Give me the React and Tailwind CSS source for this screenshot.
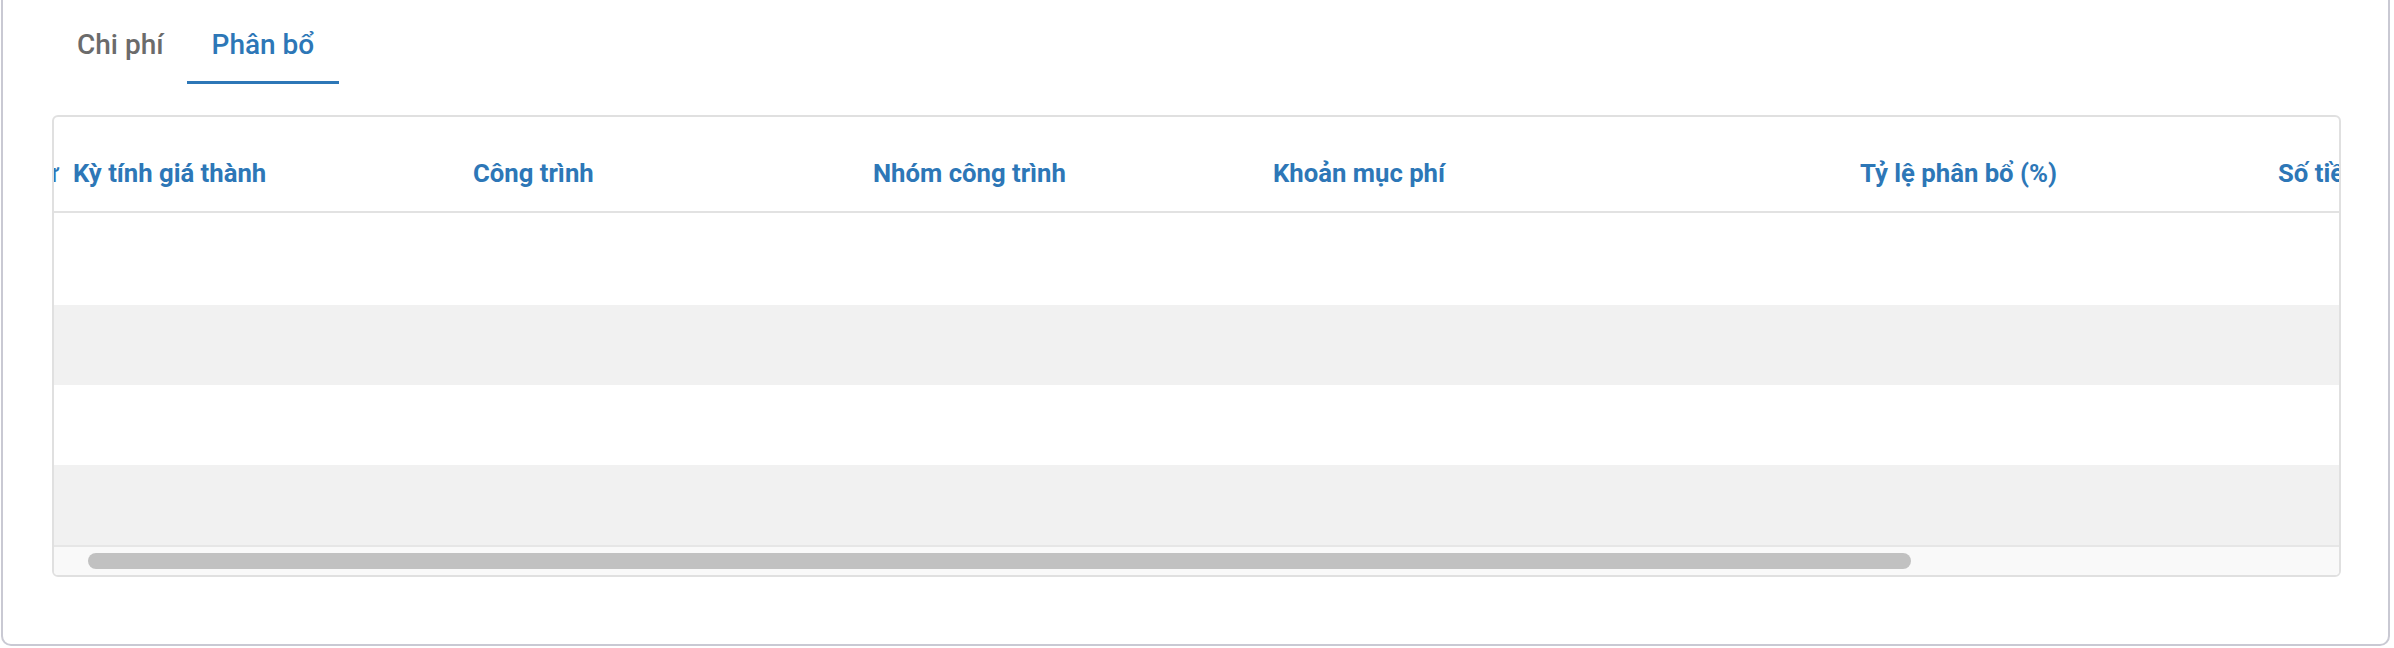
import React from "react";

const FONT = { fontFamily: "Roboto, 'Noto Sans', Arial, sans-serif" };

export default function App() {
  return (
    <div className="w-[2394px] h-[648px] bg-white" style={FONT}>
      <div className="ml-[1px] w-[2389px] h-[646px] border-2 border-t-0 border-[#c9c9d3] rounded-b-[10px] bg-white pl-[49px] pr-[47px] pt-[28px] flex flex-col">
        {/* Tabs */}
        <div className="flex items-start">
          <button className="pl-[25px] pr-[23px] pb-[19px] border-b-[3px] border-transparent text-[28px] leading-[34px] font-medium text-[#6b6b6b]">
            Chi phí
          </button>
          <button className="px-[25px] pb-[19px] border-b-[3px] border-[#2d77b7] text-[28px] leading-[34px] font-medium text-[#2d77b7]">
            Phân bổ
          </button>
        </div>

        {/* Table card */}
        <div className="mt-[31px] border-2 border-[#e0e0e0] rounded-[6px] overflow-hidden bg-white">
          {/* Header */}
          <div className="h-[96px] border-b-2 border-[#e2e2e2] overflow-hidden">
            <div className="flex ml-[-43px] pt-[41px] text-[25.7px] leading-[30px] font-bold text-[#2d77b7] whitespace-nowrap">
              <div className="w-[44px] shrink-0 flex justify-end">
                <span className="mr-[-3px]">Số chứng từ</span>
              </div>
              <div className="w-[400px] shrink-0 pl-[18px]">Kỳ tính giá thành</div>
              <div className="w-[400px] shrink-0 pl-[18px]">Công trình</div>
              <div className="w-[400px] shrink-0 pl-[18px]">Nhóm công trình</div>
              <div className="w-[587px] shrink-0 pl-[18px]">Khoản mục phí</div>
              <div className="w-[418px] shrink-0 pl-[18px]">Tỷ lệ phân bổ (%)</div>
              <div className="w-[400px] shrink-0 pl-[18px]">Số tiền phân bổ</div>
            </div>
          </div>

          {/* Rows */}
          <div className="h-[92px] bg-white" />
          <div className="h-[80px] bg-[#f1f1f1]" />
          <div className="h-[80px] bg-white" />
          <div className="h-[80px] bg-[#f1f1f1]" />

          {/* Scrollbar */}
          <div className="h-[30px] border-t-2 border-[#e6e6e6] bg-[#f9f9f9] pl-[34px] pt-[6px]">
            <div className="w-[1823px] h-[16px] rounded-full bg-[#c1c1c1]" />
          </div>
        </div>
      </div>
    </div>
  );
}
